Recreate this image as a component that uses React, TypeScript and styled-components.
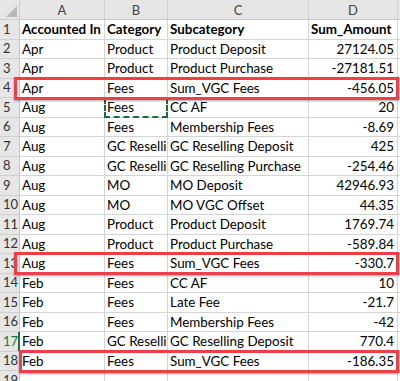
import styled, { createGlobalStyle } from "styled-components";

const GlobalStyle = createGlobalStyle`
  html, body {
    margin: 0;
    padding: 0;
    background: #ffffff;
    overflow: hidden;
  }
  body {
    font-family: Lato, "Liberation Sans", sans-serif;
  }
`;

const HEADER_H = 20;
const ROW_H = 19.5;
const rowTop = (n: number) => HEADER_H + (n - 1) * ROW_H;

type Row = [string, string, string, string];

const rows: Row[] = [
  ["Accounted In", "Category", "Subcategory", "Sum_Amount"],
  ["Apr", "Product", "Product Deposit", "27124.05"],
  ["Apr", "Product", "Product Purchase", "-27181.51"],
  ["Apr", "Fees", "Sum_VGC Fees", "-456.05"],
  ["Aug", "Fees", "CC AF", "20"],
  ["Aug", "Fees", "Membership Fees", "-8.69"],
  ["Aug", "GC Reselling", "GC Reselling Deposit", "425"],
  ["Aug", "GC Reselling", "GC Reselling Purchase", "-254.46"],
  ["Aug", "MO", "MO Deposit", "42946.93"],
  ["Aug", "MO", "MO VGC Offset", "44.35"],
  ["Aug", "Product", "Product Deposit", "1769.74"],
  ["Aug", "Product", "Product Purchase", "-589.84"],
  ["Aug", "Fees", "Sum_VGC Fees", "-330.7"],
  ["Feb", "Fees", "CC AF", "10"],
  ["Feb", "Fees", "Late Fee", "-21.7"],
  ["Feb", "Fees", "Membership Fees", "-42"],
  ["Feb", "GC Reselling", "GC Reselling Deposit", "770.4"],
  ["Feb", "Fees", "Sum_VGC Fees", "-186.35"],
  ["", "", "", ""],
];

const highlights = [
  { row: 4, left: 14 },
  { row: 13, left: 14 },
  { row: 18, left: 19 },
];

const App = () => {
  return (
    <>
      <GlobalStyle />
      <Sheet>
        <Grid>
          <Corner />
          {["A", "B", "C", "D", ""].map((c, i) => (
            <ColHeader key={i}>{c}</ColHeader>
          ))}
          {rows.map((r, i) => {
            const n = i + 1;
            return [
              <RowHeader key={`h${n}`} $active={n === 17}>{n}</RowHeader>,
              ...r.map((v, j) => (
                <Cell
                  key={`${n}-${j}`}
                  $bold={n === 1}
                  $right={j === 3 && n !== 1}
                >
                  {v}
                </Cell>
              )),
              <Cell key={`${n}-e`} />,
            ];
          })}
        </Grid>
        <Marquee $top={rowTop(5)} />
        {highlights.map((h) => (
          <Highlight key={h.row} $top={rowTop(h.row) - 2} $left={h.left} />
        ))}
      </Sheet>
    </>
  );
};

const Sheet = styled.div`
  position: relative;
  width: 400px;
  height: 381px;
  overflow: hidden;
`;

const Grid = styled.div`
  display: grid;
  grid-template-columns: 20px 85px 63px 141px 89px 40px;
  grid-template-rows: ${HEADER_H}px;
  grid-auto-rows: ${ROW_H}px;
  font-size: 13.4px;
  color: #000;
`;

const Corner = styled.div`
  position: relative;
  background: #e6e6e6;
  border-right: 1px solid #cdcdcd;
  border-bottom: 1px solid #cdcdcd;
  box-sizing: border-box;

  &::after {
    content: "";
    position: absolute;
    right: 2px;
    bottom: 2px;
    width: 0;
    height: 0;
    border-left: 11px solid transparent;
    border-bottom: 11px solid #b9b9b9;
  }
`;

const ColHeader = styled.div`
  display: flex;
  align-items: center;
  justify-content: center;
  background: #e6e6e6;
  color: #444;
  border-right: 1px solid #d0d0d0;
  border-bottom: 1px solid #c6c6c6;
  box-sizing: border-box;
  font-size: 13px;
`;

const RowHeader = styled.div<{ $active?: boolean }>`
  display: flex;
  align-items: center;
  padding-left: 3px;
  background: #e6e6e6;
  color: ${({ $active }) => ($active ? "#217346" : "#333")};
  border-bottom: 1px solid #d0d0d0;
  border-right: ${({ $active }) => ($active ? "2px solid #217346" : "1px solid #c6c6c6")};
  box-sizing: border-box;
  font-size: 13px;
  line-height: 1;
`;

const Cell = styled.div<{ $bold?: boolean; $right?: boolean }>`
  display: flex;
  align-items: center;
  justify-content: ${({ $right }) => ($right ? "flex-end" : "flex-start")};
  padding: 1px 3px 0 2px;
  border-right: 1px solid #d4d4d4;
  border-bottom: 1px solid #d4d4d4;
  box-sizing: border-box;
  font-weight: ${({ $bold }) => ($bold ? 700 : 400)};
  white-space: nowrap;
  overflow: hidden;
  line-height: 1;
`;

const Marquee = styled.div<{ $top: number }>`
  position: absolute;
  left: 104px;
  top: ${({ $top }) => $top}px;
  width: 64px;
  height: ${ROW_H + 0.5}px;
  border: 2px dashed #1e6b3f;
  box-sizing: border-box;
`;

const Highlight = styled.div<{ $top: number; $left: number }>`
  position: absolute;
  left: ${({ $left }) => $left}px;
  top: ${({ $top }) => $top}px;
  width: ${({ $left }) => 399 - $left}px;
  height: 23px;
  border: 3px solid #ef3e45;
  box-sizing: border-box;
  box-shadow: 0 1px 2px rgba(0, 0, 0, 0.35);
`;

export default App;
